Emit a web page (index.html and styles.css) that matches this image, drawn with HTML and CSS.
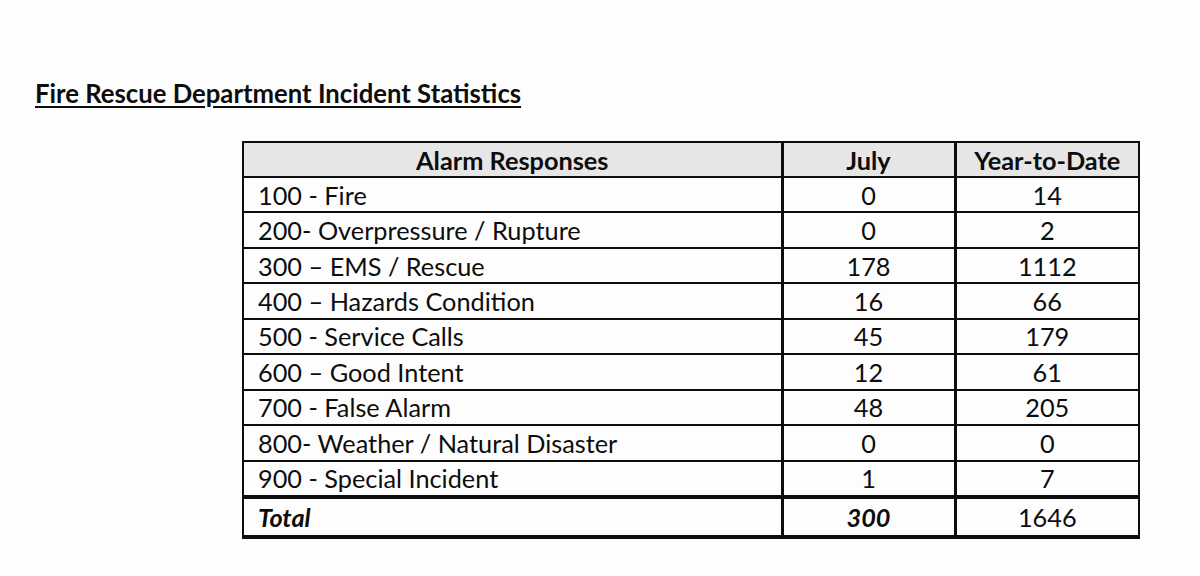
FILE: index.html
```html
<!DOCTYPE html>
<html>
<head>
<meta charset="utf-8">
<link rel="stylesheet" href="styles.css">
</head>
<body>
<div class="page">
  <h1 class="title">Fire Rescue Department Incident Statistics</h1>
  <table class="stats">
    <colgroup>
      <col class="c-name">
      <col class="c-month">
      <col class="c-ytd">
    </colgroup>
    <thead>
      <tr class="head">
        <th>Alarm Responses</th>
        <th>July</th>
        <th>Year-to-Date</th>
      </tr>
    </thead>
    <tbody>
      <tr><td class="name">100 - Fire</td><td>0</td><td>14</td></tr>
      <tr><td class="name">200- Overpressure / Rupture</td><td>0</td><td>2</td></tr>
      <tr><td class="name">300 – EMS / Rescue</td><td>178</td><td>1112</td></tr>
      <tr><td class="name">400 – Hazards Condition</td><td>16</td><td>66</td></tr>
      <tr><td class="name">500 - Service Calls</td><td>45</td><td>179</td></tr>
      <tr><td class="name">600 – Good Intent</td><td>12</td><td>61</td></tr>
      <tr><td class="name">700 - False Alarm</td><td>48</td><td>205</td></tr>
      <tr><td class="name">800- Weather / Natural Disaster</td><td>0</td><td>0</td></tr>
      <tr><td class="name">900 - Special Incident</td><td>1</td><td>7</td></tr>
      <tr class="total"><td class="name em">Total</td><td class="em">300</td><td>1646</td></tr>
    </tbody>
  </table>
</div>
</body>
</html>
```

FILE: styles.css
```css
html, body {
  margin: 0;
  padding: 0;
  background: #fdfdfd;
}

.page {
  width: 1200px;
  height: 576px;
  padding: 78px 0 0 35px;
  box-sizing: border-box;
  font-family: "Lato", "Liberation Sans", sans-serif;
  color: #0d0d0d;
}

.title {
  margin: 0;
  font-size: 25.7px;
  line-height: 30px;
  font-weight: 700;
  text-decoration: underline;
  text-decoration-thickness: 2px;
  text-underline-offset: 3px;
}

.stats {
  margin: 33px 0 0 207px;
  width: 896px;
  border-collapse: collapse;
  border: 2px solid #0d0d0d;
  table-layout: fixed;
  font-size: 25.3px;
}

.c-name { width: 539px; }
.c-month { width: 173px; }
.c-ytd { width: 184px; }

.stats th,
.stats td {
  border-top: 2px solid #0d0d0d;
  border-bottom: 2px solid #0d0d0d;
  border-left: 3px solid #0d0d0d;
  border-right: 3px solid #0d0d0d;
  padding: 0 14px;
  height: 33.45px;
  text-align: center;
  font-weight: 400;
  line-height: 30px;
}

.stats th:first-child,
.stats td:first-child {
  border-left: 2px solid #0d0d0d;
}

.stats th:last-child,
.stats td:last-child {
  border-right: 2px solid #0d0d0d;
}

.stats .head th {
  background: #e6e6e6;
  font-weight: 700;
  height: 33px;
}

.stats td.name {
  text-align: left;
}

.stats .total td {
  border-top: 4px solid #0d0d0d;
  border-bottom: 4px solid #0d0d0d;
  height: 36px;
}

.stats .em {
  font-weight: 700;
  font-style: italic;
}
```
